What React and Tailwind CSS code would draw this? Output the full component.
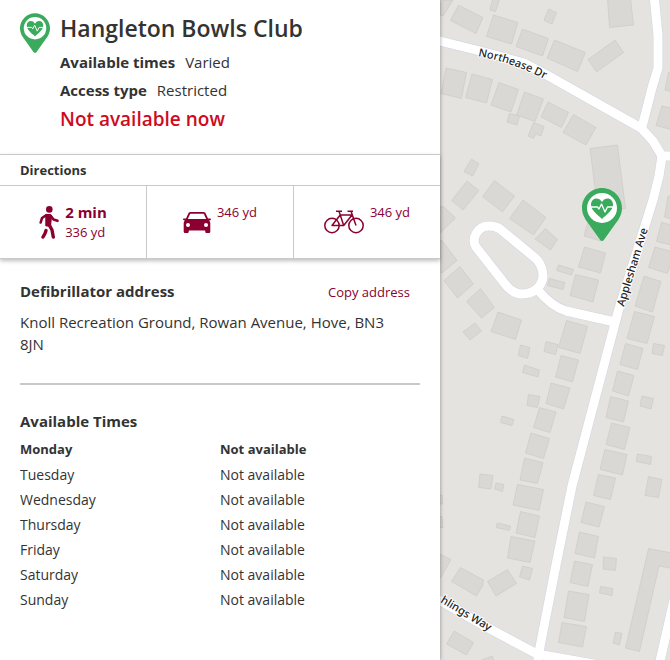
import React from "react";

const OPENING_TIMES = [
  { day: "Monday", hours: "Not available", today: true },
  { day: "Tuesday", hours: "Not available" },
  { day: "Wednesday", hours: "Not available" },
  { day: "Thursday", hours: "Not available" },
  { day: "Friday", hours: "Not available" },
  { day: "Saturday", hours: "Not available" },
  { day: "Sunday", hours: "Not available" },
];

const ROADS = [
  // Northease Dr
  "M-5 40 L40 51 L84 63 L105 74 L201 128 L213 141 L222 156",
  "M214 -5 L218 35 L218 68 L212 88 L202 127",
  "M222 156 H900",
  // Applesham Ave
  "M222 156 L219 176 L213 200 L178 312 L132 486 L116 565 L99 652 L97 670",
  // Close with the turning loop
  "M49 226 C37 226 31 239 36 247 L65 284 C71 292 76 294 82 294 C95 294 103 285 103 275 C103 267 98 260 94 257 L60 229 C57 227 53 226 49 226 Z",
  "M97 289 C106 300 116 308 126 311 L175 322",
  // Hechlings Way
  "M-10 595 L50 629 L97 654 L165 666",
  "M218 670 L234 600",
];

const BUILDINGS = [
  "0,0 13,0 3,16 0,15",
  "18.5,5 43,17.5 36,33.5 10.5,20.5",
  "53,-2 60,-2 55.5,11.5 50,10",
  "53.5,15 78,22.5 71.5,44 46.5,36.5",
  "82.5,29 108.5,38.5 102.5,56 76,46.5",
  "108.5,9 116.5,12.5 112,24 104,20.5",
  "114.5,40 145.5,52.5 137.5,71.5 107,58",
  "175,40 183.5,52.5 156.5,72 148,59.5",
  "167.5,-2 190.5,-2 193.5,25 169.5,27.5",
  "6,68 26.5,72.5 21.5,98.5 1,93.5",
  "32,74 52.5,79.5 46.5,103 25.5,97.5",
  "59,82.5 78.5,89.5 71,112 51,105",
  "84.5,92 103.5,99 95,121.5 76.5,115",
  "108,102 128.5,112.5 121.5,127.5 101,117",
  "133.5,114.5 156,127.5 146,145 123,132.5",
  "69.5,113.5 79.5,116 77,125 67,122",
  "93.5,122.5 104,126.5 101,136 95.5,134 93.5,138.5 88,136",
  "150,148.5 177.5,145 185.5,208.5 158,212",
  "228.5,72 240,75 240,94 225,90",
  "222,106 240,110 240,132 216,125.5",
  "31.5,159 39,164 32.5,176 24,171.5",
  "27,181 39,190.5 23,210 11.5,200.5",
  "54.5,180.5 74.5,196 62.5,212 42.5,196.5",
  "83,200 106,217.5 93.5,235 69.5,218.5",
  "105.5,228.5 117.5,239.5 110.5,250 95,239",
  "-2,206 4,207 15.5,218 -2,235",
  "-2,241 2,240.5 17,260.5 2,273 -2,271",
  "20,266.5 33.5,284 17.5,298 4,280.5",
  "40.5,288.5 54.5,307.5 41.5,318 26.5,301.5",
  "148,221 166,225 161,241 144,236",
  "144.5,247 165.5,253 160.5,273 138.5,267",
  "118.5,265 133.5,269.5 131.5,275 116.5,270.5",
  "109.5,278.5 125,282.5 123,289.5 107.5,285.5",
  "135.5,274.5 158.5,280 153,302 130,295.5",
  "58,312 81.5,320 75.5,339.5 51,331.5",
  "228,196 240,199 240,221 224.5,217",
  "221.5,222.5 240,227 240,247 216.5,241.5",
  "215,247 234,252 227.5,273.5 208.5,267.5",
  "204,276 221,281.5 212.5,312 195,306",
  "194.5,311.5 214.5,316.5 207,343.5 187,338.5",
  "35,323 41.5,331 30,340 23,332",
  "126.5,320.5 147.5,326.5 140,353.5 118.5,347.5",
  "106,341.5 118,344.5 115.5,354.5 104,351.5",
  "80.5,345 90,347.5 87.5,358.5 78,355.5",
  "84.5,365 99.5,370 98,377 82.5,372.5",
  "121,355.5 138.5,360 132.5,382 115.5,377",
  "111,383 130,388 123.5,409 106,403.5",
  "88.5,394.5 100,396.5 97.5,407.5 87,405.5",
  "99.5,407.5 116,412 110,432.5 93.5,427.5",
  "62,416 74,419.5 72,425.5 60.5,422.5",
  "91,433 109.5,438.5 103.5,458.5 85.5,453",
  "84.5,458 103,462.5 97.5,483.5 80,480",
  "40,474 53,475.5 51,489 38.5,487.5",
  "56,483 64,484.5 62.5,491.5 54.5,489",
  "213.5,343.5 224.5,345.5 222.5,355.5 212,353.5",
  "185.5,343.5 203,348.5 197.5,369.5 180,364.5",
  "177.5,371 194,375.5 188.5,396 172.5,391",
  "170.5,396.5 188.5,401 183.5,422 166,417.5",
  "202,396 213.5,398.5 211,409 200,406",
  "171.5,423 190,427.5 184.5,449.5 166,444.5",
  "165,449.5 187,454.5 182.5,475 160,469.5",
  "197.5,454 211.5,456.5 210.5,464.5 196,461.5",
  "158.5,474.5 175.5,478 170.5,499.5 153.5,495.5",
  "208.5,476.5 222,479.5 218.5,497.5 205,495.5",
  "77.5,484.5 103.5,489.5 99,510.5 73,505",
  "80.5,511.5 99.5,516 95,537.5 76,533",
  "57.5,523 70.5,526 69.5,530.5 56,527.5",
  "71,536.5 95,541 90,562.5 67.5,558",
  "82.5,566 92.5,568.5 89.5,580 79.5,577",
  "20.5,567.5 43.5,580 42.5,586 36.5,596 11.5,581.5",
  "67.5,569.5 76.5,583.5 56,596 47.5,581.5",
  "-2,553 11,559.5 1,577.5 -2,577",
  "-2,495 2,495 2.5,504 -2,504",
  "-2,516.5 2,516.5 3,527.5 -2,527.5",
  "14,631 33.5,642.5 26.5,655 6.5,644",
  "41.5,660 52.5,656 54,662 41,662",
  "146,502 164.5,506.5 159,527 141,522.5",
  "139.5,532 158.5,536.5 154.5,558 135,553.5",
  "134.5,561 152.5,564.5 148,586.5 130,582.5",
  "163.5,557 176.5,558.5 175.5,570.5 163,569",
  "160.5,586.5 173,588.5 172,595.5 159.5,593",
  "128.5,591 149,594.5 144.5,621.5 124,617.5",
  "122,622.5 146.5,626.5 142.5,647 118.5,642.5",
  "175.5,632 182,633.5 179.5,645 173,643",
  "208.5,548.5 240,554.5 240,570 219,566 199.5,651.5 185.5,648",
];

const PinShape = () => (
  <>
    <path
      d="M20 0C9 0 0 9 0 20c0 4.500 1.500 8 3.500 11.500L18.200 52c.9 1.300 2.700 1.300 3.600 0L36.500 31.500C38.500 28 40 24.500 40 20 40 9 31 0 20 0Z"
      fill="#3aaa5c"
    />
    <circle cx="20" cy="20" r="15" fill="#fff" />
    <path
      d="M20 14c-1.500-2.500-3.500-3.500-5.500-3.500C11.300 10.500 9 13.200 9 16.500c0 6 6.500 10 11 14.500 4.500-4.500 11-8.500 11-14.500 0-3.300-2.300-6-5.500-6-2 0-4 1-5.500 3.500Z"
      fill="#3aaa5c"
    />
    <path
      d="M8 19h7.500l1.500 2 2.500-5 3.500 8 2.500-5H32"
      fill="none"
      stroke="#fff"
      strokeWidth="1.300"
      strokeLinejoin="round"
    />
  </>
);

const WalkIcon = () => (
  <svg viewBox="0 0 20 33" className="h-[33px] w-5 shrink-0" aria-hidden="true">
    <circle cx="10.300" cy="3.400" r="3.300" fill="#8b0030" />
    <path d="M6.500 8h5l1.500 3-1 9H6.500Z" fill="#8b0030" />
    <g
      fill="none"
      stroke="#8b0030"
      strokeLinecap="round"
      strokeLinejoin="round"
    >
      <path strokeWidth="2.600" d="M7.500 9 3 12l-1.300 4.500M11.500 9.500l3 4 4 1.300" />
      <path strokeWidth="3.400" d="M10 18.500l3 5.500 1.300 7M7 24.500l-1 3L4 31" />
      <path strokeWidth="2" d="M7.500 11v8.500h3.500V10" />
    </g>
  </svg>
);

const CarIcon = () => (
  <svg viewBox="0 0 28 21" className="h-[21px] w-7 shrink-0" aria-hidden="true">
    <path
      fillRule="evenodd"
      fill="#8b0030"
      d="M7.500 0h13c1 0 1.800.5 2.200 1.500L25 6.500h2.300c.9 0 .9 1.600 0 1.700l-1.300.3c.8.800 1.300 1.700 1.300 3V19.500c0 .9-.5 1.500-1.300 1.500h-2.500c-.8 0-1.300-.6-1.300-1.500V18.500H5.800V19.500c0 .9-.5 1.500-1.300 1.500H2c-.8 0-1.300-.6-1.300-1.500V11.500c0-1.300.5-2.200 1.300-3L.7 8.200C-.2 8.100-.2 6.500.7 6.500H3l2.300-5C5.700.5 6.500 0 7.500 0ZM7.200 1.800 4.800 7h18.400l-2.400-5.200Z"
    />
    <circle cx="5" cy="13" r="2" fill="#fff" />
    <circle cx="23" cy="13" r="2" fill="#fff" />
  </svg>
);

const BikeIcon = () => (
  <svg
    viewBox="0 0 40 24"
    className="h-6 w-10 shrink-0"
    fill="none"
    stroke="#8b0030"
    strokeWidth="1.500"
    strokeLinejoin="round"
    aria-hidden="true"
  >
    <circle cx="8" cy="15.500" r="7.200" />
    <circle cx="32" cy="15.500" r="7.200" />
    <path d="M12 1.200h6M15 1.200l4.700 14.300M8 15.500h11.700L28 5H16.200L8 15.500ZM23.500 1.200H29M27 1.200l5 14.300" />
  </svg>
);

/**
 * One travel option in the directions bar
 */
const DirectionLink = ({ label, icon, time, distance }) => (
  <a
    href="#directions"
    aria-label={label}
    className="flex flex-1 justify-center gap-1.5 pt-4 text-[#8b0030]"
  >
    <span className="flex h-10 items-center">{icon}</span>
    <span className="flex flex-col text-[13px] leading-5">
      {time && <span className="text-[15px] font-bold">{time}</span>}
      <span>{distance}</span>
    </span>
  </a>
);

const StreetMap = () => (
  <svg
    viewBox="0 0 230 660"
    preserveAspectRatio="xMinYMin slice"
    className="sticky top-0 h-screen min-w-0 flex-1 bg-[#e4e3df]"
    role="img"
    aria-label="Map"
  >
    <g fill="#d9d8d4" stroke="#c9c8c3" strokeWidth="0.600">
      {BUILDINGS.map((points) => (
        <polygon key={points} points={points} />
      ))}
    </g>
    <g fill="none" stroke="#d5d6e4" strokeWidth="10.200" strokeLinejoin="round">
      {ROADS.map((d) => (
        <path key={d} d={d} />
      ))}
    </g>
    <g fill="none" stroke="#fff" strokeWidth="9" strokeLinejoin="round">
      {ROADS.map((d) => (
        <path key={d} d={d} />
      ))}
    </g>

    {/* Street names */}
    <path id="northease" d="M38 56 Q76 63 112 83" fill="none" />
    <g
      fill="#222"
      stroke="#fff"
      strokeWidth="2"
      paintOrder="stroke"
      className="font-['Noto_Sans',sans-serif] text-[11px] font-medium"
    >
      <text>
        <textPath href="#northease">Northease Dr</textPath>
      </text>
      <text transform="translate(184 307) rotate(-73)">Applesham Ave</text>
      <text transform="translate(0 602) rotate(31)">hlings Way</text>
    </g>

    <g transform="translate(142 188)">
      <PinShape />
    </g>
  </svg>
);

const App = () => {
  return (
    <div className="flex min-h-screen items-start bg-white font-['Trebuchet_MS','Open_Sans',sans-serif] text-[#333]">
      <main className="relative z-10 min-h-screen w-2/3 max-w-[440px] bg-white shadow-[0_0_4px_rgba(0,0,0,0.4)]">
        {/* Header */}
        <header className="flex gap-2.5 px-5 pt-3 pb-5">
          <svg
            viewBox="0 0 40 53"
            className="mt-px h-10 w-[30px] shrink-0"
            aria-hidden="true"
          >
            <PinShape />
          </svg>
          <div>
            <h1 className="text-[23px] leading-8 font-semibold">
              Hangleton Bowls Club
            </h1>
            <dl className="mt-1 text-[15px] leading-7">
              <div className="flex gap-2.5">
                <dt className="font-bold">Available times</dt>
                <dd>Varied</dd>
              </div>
              <div className="flex gap-2.5">
                <dt className="font-bold">Access type</dt>
                <dd>Restricted</dd>
              </div>
            </dl>
            <p className="text-[19px] leading-[30px] font-semibold text-[#cf0a20]">
              Not available now
            </p>
          </div>
        </header>

        {/* Directions */}
        <section className="border-b border-[#c8c9c9] shadow-[0_2px_4px_rgba(0,0,0,0.25)]">
          <h2 className="border-y border-[#c8c9c9] px-5 text-[13px] leading-[30px] font-bold">
            Directions
          </h2>
          <nav className="flex h-[72px] divide-x divide-[#c8c9c9]">
            <DirectionLink
              label="Walking, 2 min, 336 yd"
              icon={<WalkIcon />}
              time="2 min"
              distance="336 yd"
            />
            <DirectionLink
              label="Driving, 346 yd"
              icon={<CarIcon />}
              distance="346 yd"
            />
            <DirectionLink
              label="Cycling, 346 yd"
              icon={<BikeIcon />}
              distance="346 yd"
            />
          </nav>
        </section>

        {/* Address */}
        <section className="mx-5 border-b-2 border-[#c8c9c9] pt-[22px] pb-7">
          <div className="flex items-baseline justify-between pr-2.5">
            <h2 className="text-[15px] leading-5 font-bold">
              Defibrillator address
            </h2>
            <button type="button" className="text-[13px] text-[#8b0030]">
              Copy address
            </button>
          </div>
          <p className="mt-2 pr-5 text-[15px] leading-[22px]">
            Knoll Recreation Ground, Rowan Avenue, Hove, BN3 8JN
          </p>
        </section>

        {/* Opening times */}
        <section className="px-5 pt-6 pb-10">
          <h2 className="mb-1 text-[15px] leading-6 font-bold">
            Available Times
          </h2>
          <table className="w-full table-fixed text-left text-[14px] leading-[25px]">
            <tbody>
              {OPENING_TIMES.map(({ day, hours, today }) => (
                <tr
                  key={day}
                  className={today ? "text-[13px] font-bold" : "font-normal"}
                >
                  <th scope="row" className="[font-weight:inherit]">
                    {day}
                  </th>
                  <td>{hours}</td>
                </tr>
              ))}
            </tbody>
          </table>
        </section>
      </main>

      <StreetMap />
    </div>
  );
};

export default App;
